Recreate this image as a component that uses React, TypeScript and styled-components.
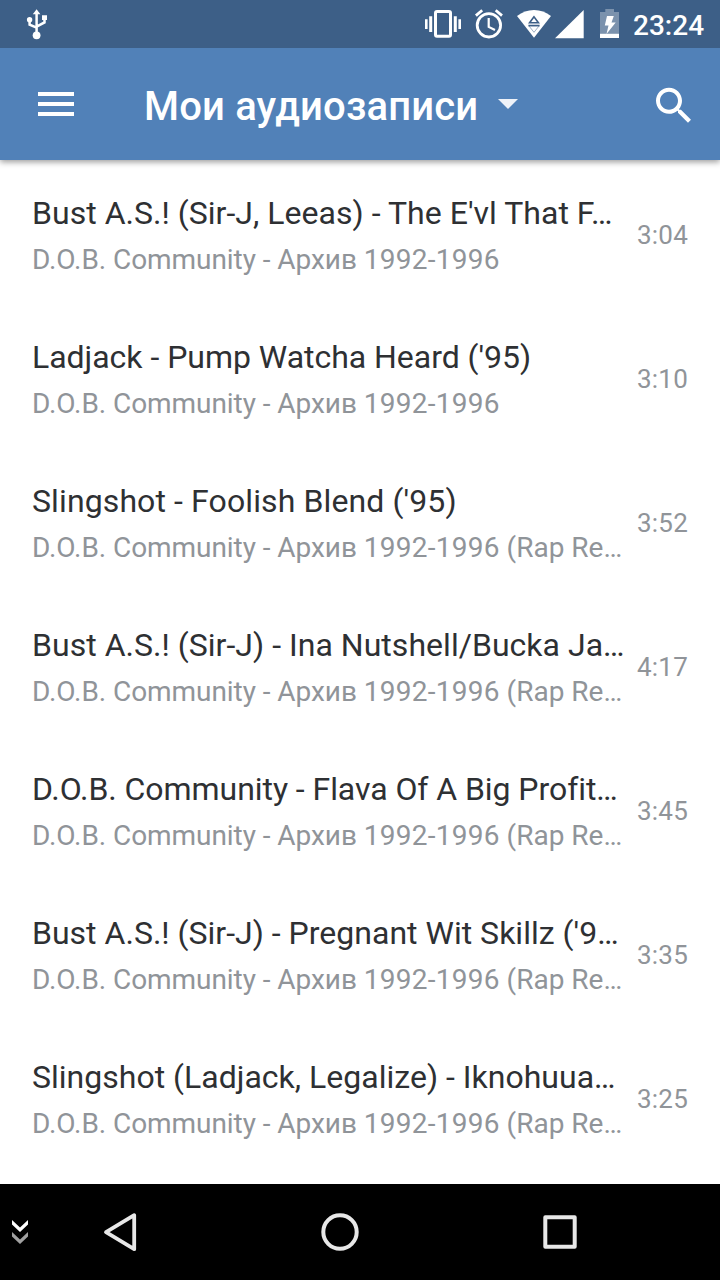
import React from 'react';
import styled, { createGlobalStyle } from 'styled-components';

const Global = createGlobalStyle`
  * { box-sizing: border-box; }
  body { margin: 0; background: #fff; font-family: Roboto, sans-serif; }
  svg { display: block; flex: none; }
`;
const Screen = styled.div`
  width: 720px;
  height: 1280px;
  display: flex;
  flex-direction: column;
  overflow: hidden;
`;
const StatusBar = styled.div`
  height: 48px;
  flex: none;
  background: #3d5f87;
  color: #fff;
  display: flex;
  justify-content: space-between;
  z-index: 2;
`;
const StatusRight = styled.div`display: flex;`;
const Clock = styled.div`
  width: 87px;
  padding-top: 3px;
  font-size: 28px;
  line-height: 46px;
  font-weight: 500;
  white-space: nowrap;
`;
const AppBar = styled.header`
  height: 112px;
  flex: none;
  background: #5181b8;
  color: #fff;
  display: flex;
  box-shadow: 0 2px 6px rgba(0, 0, 0, 0.4);
  z-index: 1;
`;
const Title = styled.h1`
  margin: 0;
  padding-top: 3px;
  width: 354px;
  font-size: 40px;
  line-height: 112px;
  font-weight: 500;
  letter-spacing: 0.17px;
  white-space: nowrap;
`;
const Spacer = styled.div`flex: 1;`;
const List = styled.div`
  flex: 1;
  background: #fff;
`;
const Row = styled.div`
  height: 144px;
  padding: 32px 32px 0 32px;
  display: flex;
  justify-content: space-between;
`;
const Texts = styled.div`width: 593px; flex: none;`;
const Song = styled.div<{ $tracking: number }>`
  font-size: 32px;
  line-height: 42px;
  letter-spacing: ${(p) => p.$tracking}px;
  color: #2e3033;
  white-space: nowrap;
`;
const Album = styled.div`
  font-size: 28px;
  line-height: 36px;
  margin-top: 8px;
  color: #909499;
  white-space: nowrap;
`;
const Label = styled.span`letter-spacing: -0.06px;`;
const Years = styled.span`letter-spacing: 0.25px;`;
const Time = styled.div`
  font-size: 26px;
  line-height: 32px;
  margin-top: 27px;
  letter-spacing: 0.2px;
  color: #909499;
`;
const NavBar = styled.nav`
  height: 96px;
  flex: none;
  background: #000;
  display: flex;
`;

type Track = { song: string; time: string; tracking: number; rest?: string };

const songs: Track[] = [
  { song: "Bust A.S.! (Sir-J, Leeas) - The E'vl That F…", time: '3:04', tracking: 0.03 },
  { song: "Ladjack - Pump Watcha Heard ('95)", time: '3:10', tracking: -0.03 },
  { song: "Slingshot - Foolish Blend ('95)", time: '3:52', tracking: 0.11, rest: ' (Rap Re…' },
  { song: 'Bust A.S.! (Sir-J) - Ina Nutshell/Bucka Ja…', time: '4:17', tracking: 0.03, rest: ' (Rap Re…' },
  { song: 'D.O.B. Community - Flava Of A Big Profit…', time: '3:45', tracking: -0.06, rest: ' (Rap Re…' },
  { song: "Bust A.S.! (Sir-J) - Pregnant Wit Skillz ('9…", time: '3:35', tracking: 0.01, rest: ' (Rap Re…' },
  { song: 'Slingshot (Ladjack, Legalize) - Iknohuua…', time: '3:25', tracking: 0.01, rest: ' (Rap Re…' },
];

const UsbIcon = () => (
  <svg width="72" height="48" viewBox="0 0 72 48" fill="#fff">
    <path d="M36.6 9.3l3.8 5h-7.6zM42 15.2h5V20h-5z" />
    <circle cx="29.6" cy="19.8" r="2.7" />
    <circle cx="36.6" cy="35.3" r="3.9" />
    <path d="M36.6 12v22M29.6 20v4.6l7 3.1M44.5 19v3.4l-7.9 4.3" fill="none" stroke="#fff" strokeWidth="2.5" />
  </svg>
);
const VibrateIcon = () => (
  <svg width="42" height="48" viewBox="424 0 42 48" fill="#fff">
    <rect x="435.5" y="11.5" width="15" height="24.7" rx="1.5" fill="none" stroke="#fff" strokeWidth="3" />
    <path d="M425 19.3h2.6V29H425zM429.2 16.3h3V32h-3zM453.8 16.3h3V32h-3zM458.4 19.3h2.6V29h-2.6z" />
  </svg>
);
const AlarmIcon = () => (
  <svg width="46" height="48" viewBox="466 0 46 48" fill="none" stroke="#fff">
    <circle cx="488.9" cy="25.3" r="11.7" strokeWidth="2.8" />
    <path d="M488.7 18v8.9l6.3 3.2" strokeWidth="2.2" />
    <path d="M475.9 15.6l6.3-5.3M502 15.6l-6.3-5.3" strokeWidth="2.8" />
  </svg>
);
const WifiIcon = () => (
  <svg width="43" height="48" viewBox="512 0 43 48">
    <path d="M517 16q7.5-6 17-6t17 6L534 37.7z" fill="#fff" />
    <path d="M534 16.8l-4.4 5.9h8.800z" fill="none" stroke="#3d5f87" strokeWidth="1.6" />
    <path d="M528.4 25.6h11.2" stroke="#3d5f87" strokeWidth="1.7" />
    <path d="M529 26l5 6.3 5-6.3" fill="none" stroke="#3d5f87" strokeWidth="0.5" />
  </svg>
);
const SignalIcon = () => (
  <svg width="40" height="48" viewBox="555 0 40 48" fill="#fff"><path d="M555 38.3L583.7 10v28.3z" /></svg>
);
const BatteryIcon = () => (
  <svg width="38" height="48" viewBox="595 0 38 48" fill="#fff">
    <path d="M605.3 9h8.700v3h5v21.700h-19V12h5.300z" opacity=".32" />
    <path d="M600 33.700h19V38h-19z" />
    <path d="M607 16h6.800l-2.300 6.500h4.200L606.500 34l2-8.500H604.800z" />
  </svg>
);

export default function App() {
  return (
    <Screen>
      <Global />
      <StatusBar>
        <UsbIcon />
        <StatusRight>
          <VibrateIcon />
          <AlarmIcon />
          <WifiIcon />
          <SignalIcon />
          <BatteryIcon />
          <Clock>23:24</Clock>
        </StatusRight>
      </StatusBar>
      <AppBar>
        <svg width="144" height="112" fill="#fff"><path d="M38 44h36v4H38zM38 54h36v4H38zM38 64h36v4H38z" /></svg>
        <Title>Мои аудиозаписи</Title>
        <svg width="20" height="112" fill="#eef2f8"><path d="M0 51h20l-10 10z" /></svg>
        <Spacer />
        <svg width="70" height="112" viewBox="650 48 70 112" fill="#fff">
          <path transform="translate(650 81.8) scale(2)" d="M15.5 14h-.79l-.28-.27C15.41 12.59 16 11.11 16 9.5 16 5.91 13.09 3 9.5 3S3 5.91 3 9.5 5.91 16 9.5 16c1.61 0 3.09-.59 4.23-1.57l.27.28v.79l5 4.99L20.49 19l-4.99-5zm-6 0C7.01 14 5 11.99 5 9.5S7.01 5 9.5 5 14 7.01 14 9.5 11.99 14 9.5 14z" />
        </svg>
      </AppBar>
      <List>
        {songs.map(({ song, time, tracking, rest }) => (
          <Row key={song}>
            <Texts>
              <Song $tracking={tracking}>{song}</Song>
              <Album>
                <Label>D.O.B. Community - Архив </Label>
                <Years>1992-1996</Years>
                {rest}
              </Album>
            </Texts>
            <Time>{time}</Time>
          </Row>
        ))}
      </List>
      <NavBar>
        <svg width="80" height="96">
          <path d="M12 36l8 7.500 8-7.500v4.500l-8 7.500-8-7.500z" fill="#fff" />
          <path d="M12 48l8 7.500 8-7.500v4.500l-8 7.500-8-7.500z" fill="#a0a0a0" />
        </svg>
        <svg width="220" height="96" viewBox="80 0 220 96" fill="none" stroke="#e8e8e8" strokeWidth="3.8" strokeLinejoin="round">
          <path d="M106 48.2L134.2 31.2v34z" />
        </svg>
        <svg width="220" height="96" viewBox="300 0 220 96" fill="none" stroke="#e8e8e8" strokeWidth="4">
          <circle cx="340" cy="48" r="16.7" />
        </svg>
        <svg width="80" height="96" viewBox="520 0 80 96" fill="none" stroke="#e8e8e8" strokeWidth="4" strokeLinejoin="round">
          <path d="M545.3 33.3h29.4v29.4h-29.4z" />
        </svg>
      </NavBar>
    </Screen>
  );
}
